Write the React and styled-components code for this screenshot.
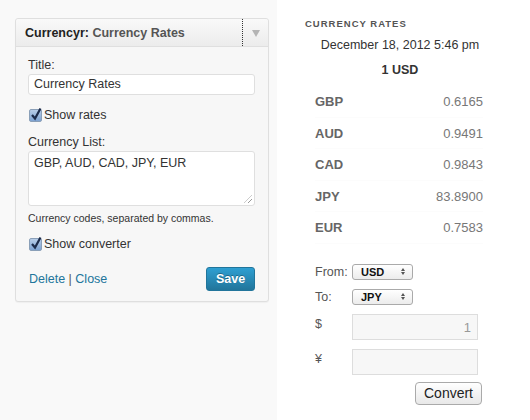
import React from 'react'
import styled, { createGlobalStyle } from 'styled-components'

const Global = createGlobalStyle`
	body {
		margin: 0;
		background: #fff;
		font-family: 'Liberation Sans', Arial, sans-serif;
	}
`

const Page = styled.div`
	display: flex;
	width: 530px;
	height: 420px;
`

const Sidebar = styled.div`
	width: 277px;
	background: #f9f9f9;
	padding: 18px 0 0 15px;
	box-sizing: border-box;
`

const Widget = styled.div`
	width: 252px;
	border: 1px solid #dfdfdf;
	border-radius: 3px;
	background: #f7f7f7;
	box-shadow: 0 1px 1px rgba(0, 0, 0, 0.04);
`

const WidgetTop = styled.div`
	height: 27px;
	display: flex;
	align-items: center;
	border-bottom: 1px solid #dfdfdf;
	background: linear-gradient(#f9f9f9, #ececec);
	border-radius: 3px 3px 0 0;
`

const WidgetTitle = styled.div`
	flex: 1;
	padding-left: 9px;
	font-size: 12.5px;
	font-weight: bold;
	color: #222;
	span {
		color: #555;
	}
`

const Toggle = styled.div`
	width: 25px;
	height: 100%;
	border-left: 1px dotted #333;
	display: flex;
	align-items: center;
	justify-content: center;
	&::after {
		content: '';
		border-left: 4px solid transparent;
		border-right: 4px solid transparent;
		border-top: 7px solid #b4b4b4;
		margin-top: 1px;
	}
`

const WidgetBody = styled.div`
	padding: 11px 13px 10px 12px;
	font-size: 12.5px;
	color: #333;
`

const Label = styled.div`
	margin-bottom: 2px;
	margin-top: ${p => p.$top || 0}px;
`

const TextInput = styled.div`
	height: 19px;
	border: 1px solid #dfdfdf;
	border-radius: 3px;
	background: #fff;
	padding: 0 5px;
	line-height: 19px;
	color: #333;
	font-size: 12.5px;
`

const TextArea = styled.div`
	position: relative;
	height: 55px;
	border: 1px solid #dfdfdf;
	border-radius: 3px;
	background: #fff;
	padding: 4px 5px;
	box-sizing: border-box;
	color: #333;
	&::after {
		content: '';
		position: absolute;
		right: 2px;
		bottom: 2px;
		width: 8px;
		height: 8px;
		background: repeating-linear-gradient(135deg, transparent 0 2px, #999 2px 3px);
		clip-path: polygon(100% 0, 100% 100%, 0 100%);
	}
`

const CheckRow = styled.label`
	display: flex;
	align-items: center;
	gap: 2px;
	margin: ${p => p.$top}px 0 0 1px;
`

const Box = styled.span`
	width: 11px;
	height: 11px;
	border: 1px solid #8a9fb8;
	border-radius: 2px;
	background: linear-gradient(#b7cde8, #7ea3d2);
	position: relative;
	svg {
		position: absolute;
		left: 0;
		top: -3px;
	}
`

const Hint = styled.div`
	font-size: 10.5px;
	color: #333;
	margin-top: 6px;
`

const Actions = styled.div`
	display: flex;
	justify-content: space-between;
	align-items: center;
	margin-top: 16px;
`

const Links = styled.div`
	color: #21759b;
	font-size: 12.5px;
	padding-left: 1px;
	b {
		font-weight: normal;
		color: #555;
	}
`

const SaveButton = styled.button`
	width: 49px;
	height: 24px;
	border: 1px solid #21759b;
	border-radius: 3px;
	background: linear-gradient(#2e9fd2, #21759b);
	color: #fff;
	font: bold 12.5px 'Liberation Sans', Arial, sans-serif;
	padding: 0;
	text-shadow: 0 -1px 0 rgba(0, 0, 0, 0.3);
`

const Rates = styled.div`
	flex: 1;
	padding: 18px 0 0 28px;
	color: #333;
	font-size: 12.5px;
`

const Heading = styled.div`
	font-size: 9.5px;
	font-weight: bold;
	letter-spacing: 1px;
	color: #555;
`

const Stamp = styled.div`
	width: 190px;
	text-align: center;
	font-weight: ${p => (p.$bold ? 'bold' : 'normal')};
	margin-top: ${p => (p.$bold ? 11 : 9)}px;
`

const RateList = styled.div`
	width: 168px;
	margin: 9px 0 0 10px;
`

const RateRow = styled.div`
	display: flex;
	justify-content: space-between;
	height: 31.5px;
	line-height: 31.5px;
	font-size: 13px;
	border-bottom: 1px solid #fcfcfc;
	box-sizing: border-box;
`

const Code = styled.span`
	font-weight: bold;
	color: #666;
`

const Value = styled.span`
	color: #777;
`

const Converter = styled.div`
	margin: 20px 0 0 10px;
	display: grid;
	grid-template-columns: 37px 126px;
	row-gap: 9px;
	align-items: start;
`

const ConvLabel = styled.div`
	color: #555;
	font-size: 12.5px;
	line-height: ${p => (p.$field ? '20px' : '16px')};
`

const Select = styled.div`
	width: 61px;
	height: 16px;
	border: 1px solid #aaa;
	border-radius: 3px;
	background: linear-gradient(#fff, #ececec);
	display: flex;
	align-items: center;
	justify-content: space-between;
	padding: 0 7px 0 8px;
	box-sizing: border-box;
	font: bold 11px 'Liberation Sans', Arial, sans-serif;
	color: #111;
`

const Arrows = styled.span`
	display: flex;
	flex-direction: column;
	gap: 1px;
	&::before,
	&::after {
		content: '';
		border-left: 2.5px solid transparent;
		border-right: 2.5px solid transparent;
	}
	&::before {
		border-bottom: 3px solid #555;
	}
	&::after {
		border-top: 3px solid #555;
	}
`

const Field = styled.div`
	height: 26px;
	border: 1px solid #ddd;
	background: #f7f7f7;
	box-sizing: border-box;
	text-align: right;
	padding: 0 6px;
	line-height: 25px;
	font-size: 13px;
	color: #999;
`

const ConvertRow = styled.div`
	grid-column: 2;
	display: flex;
	justify-content: flex-end;
	margin-top: -2px;
`

const ConvertButton = styled.button`
	width: 67px;
	height: 23px;
	border: 1px solid #aaa;
	border-radius: 4px;
	background: linear-gradient(#fff, #e8e8e8);
	font: 14px 'Liberation Sans', Arial, sans-serif;
	color: #222;
	padding: 0;
	margin-right: -4px;
`

function Check() {
	return (
		<Box>
			<svg width='12' height='14' viewBox='0 0 12 14'>
				<path d='M2 8 L5 11.5 L10.5 1.5' fill='none' stroke='#1c2b4a' strokeWidth='2.2' />
			</svg>
		</Box>
	)
}

const rates = [
	['GBP', '0.6165'],
	['AUD', '0.9491'],
	['CAD', '0.9843'],
	['JPY', '83.8900'],
	['EUR', '0.7583'],
]

export default function App() {
	return (
		<Page>
			<Global />
			<Sidebar>
				<Widget>
					<WidgetTop>
						<WidgetTitle>
							Currencyr: <span>Currency Rates</span>
						</WidgetTitle>
						<Toggle />
					</WidgetTop>
					<WidgetBody>
						<Label>Title:</Label>
						<TextInput>Currency Rates</TextInput>
						<CheckRow $top={13}>
							<Check />
							Show rates
						</CheckRow>
						<Label $top={13}>Currency List:</Label>
						<TextArea>GBP, AUD, CAD, JPY, EUR</TextArea>
						<Hint>Currency codes, separated by commas.</Hint>
						<CheckRow $top={13}>
							<Check />
							Show converter
						</CheckRow>
						<Actions>
							<Links>
								Delete <b>|</b> Close
							</Links>
							<SaveButton>Save</SaveButton>
						</Actions>
					</WidgetBody>
				</Widget>
			</Sidebar>
			<Rates>
				<Heading>CURRENCY RATES</Heading>
				<Stamp>December 18, 2012 5:46 pm</Stamp>
				<Stamp $bold>1 USD</Stamp>
				<RateList>
					{rates.map(([code, value]) => (
						<RateRow key={code}>
							<Code>{code}</Code>
							<Value>{value}</Value>
						</RateRow>
					))}
				</RateList>
				<Converter>
					<ConvLabel>From:</ConvLabel>
					<Select>
						USD
						<Arrows />
					</Select>
					<ConvLabel>To:</ConvLabel>
					<Select>
						JPY
						<Arrows />
					</Select>
					<ConvLabel $field>$</ConvLabel>
					<Field>1</Field>
					<ConvLabel $field>¥</ConvLabel>
					<Field />
					<ConvertRow>
						<ConvertButton>Convert</ConvertButton>
					</ConvertRow>
				</Converter>
			</Rates>
		</Page>
	)
}
